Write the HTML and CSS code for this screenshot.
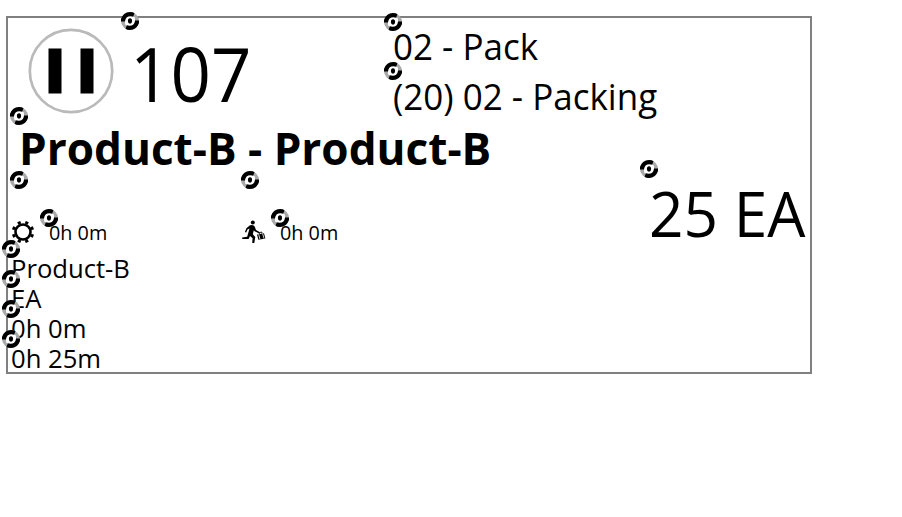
FILE: index.html
```
<!DOCTYPE html>
<html lang="en">
<head>
<meta charset="utf-8">
<title>Job card</title>
<link rel="stylesheet" href="styles.css">
</head>
<body>
<svg width="0" height="0" class="defs">
  <symbol id="link" viewBox="0 0 18 18">
    <circle cx="9" cy="9" r="9" fill="#aaa"/>
    <path d="M0 9.500V7Q2.500 0 9 0Q12 0 13.500 1.300L12 5H7L4 9.500Z" fill="#000"/>
    <path d="M18 8.500V11Q15.500 18 9 18Q6 18 4.500 16.700L6 13H11L14 8.500Z" fill="#000"/>
    <path d="M4 9.500Q4.500 4.200 9.500 4.200L13.500 5Q14.200 6.500 14 8.500Q13.500 13.800 8.500 13.800L4.500 13Q3.800 11.500 4 9.500Z" fill="#fff"/>
    <ellipse cx="9" cy="9" rx="2.100" ry="2.700" fill="#000"/>
  </symbol>
</svg>
<main class="card">
  <header class="head">
    <svg class="pause" viewBox="0 0 86 86"><circle cx="43" cy="43" r="41.200" fill="none" stroke="#bababa" stroke-width="2.700"/><path d="M20.500 20.500h13v45h-13zM52.500 20.500h13v45h-13z"/></svg>
    <div class="field number"><span class="text">107</span><svg class="badge"><use href="#link"/></svg></div>
    <div class="ops">
      <div class="field op"><span class="text">02 - Pack</span><svg class="badge"><use href="#link"/></svg></div>
      <div class="field op"><span class="text">(20) 02 - Packing</span><svg class="badge"><use href="#link"/></svg></div>
    </div>
  </header>
  <h1 class="field title"><span class="text">Product-B - Product-B</span><svg class="badge"><use href="#link"/></svg></h1>
  <section class="stats">
    <div class="field stat">
      <svg class="badge"><use href="#link"/></svg>
      <svg class="icon" viewBox="0 0 24 24"><circle cx="12" cy="12" r="7.500" fill="none" stroke="#000" stroke-width="2.600"/><path d="M15.200 4.200 16.300 1.600M19.800 8.800 22.400 7.700M19.800 15.200 22.400 16.300M15.200 19.800 16.300 22.400M8.800 19.800 7.700 22.400M4.200 15.200 1.600 16.300M4.200 8.800 1.600 7.700M8.800 4.200 7.700 1.600" stroke="#000" stroke-width="3.200"/></svg>
      <div class="field time"><span class="text">0h 0m</span><svg class="badge"><use href="#link"/></svg></div>
    </div>
    <div class="field stat">
      <svg class="badge"><use href="#link"/></svg>
      <svg class="icon" viewBox="0 0 24 24"><circle cx="10.800" cy="2.500" r="2"/><path d="M8 5.300Q11.500 4.200 12.700 6.500L14 10 17.500 12 16.700 13.300 12.600 11.300 11.800 10.200 10.800 14.200 13.300 17 12.300 23H10.200L10.600 18.300 8 16 6.600 19 .2 19V17.400L5.200 16.800 7.500 8.500 5.500 9.500 4.200 12.500 2.900 12 4.400 8.200Z"/><path d="m15 14.500 7-1.200 1.400 5.200-7 1.300z"/><path d="m17.400 14.200-.3-1.600 2.700-.5.300 1.500" fill="none" stroke="#000" stroke-width=".9"/><path d="m16.600 14.200 1.400 5M20.600 13.500l1.400 5" stroke="#fff" stroke-width=".8"/></svg>
      <div class="field time"><span class="text">0h 0m</span><svg class="badge"><use href="#link"/></svg></div>
    </div>
    <div class="field qty"><span class="text">25 EA</span><svg class="badge"><use href="#link"/></svg></div>
  </section>
  <section class="list">
    <div class="field row"><span class="text">Product-B</span><svg class="badge"><use href="#link"/></svg></div>
    <div class="field row"><span class="text">EA</span><svg class="badge"><use href="#link"/></svg></div>
    <div class="field row"><span class="text">0h 0m</span><svg class="badge"><use href="#link"/></svg></div>
    <div class="field row"><span class="text">0h 25m</span><svg class="badge"><use href="#link"/></svg></div>
  </section>
</main>
</body>
</html>
```
FILE: styles.css
```
* { box-sizing: border-box; }
body { margin: 0; background: #fff; color: #000; font-family: "Segoe UI", "Open Sans", sans-serif; }
.defs { display: block; height: 0; }
.card { width: 806px; height: 358px; margin: 16px 0 0 6px; border: 2px solid #808080; }
.field { position: relative; white-space: nowrap; }
.text { display: inline-block; transform-origin: 0 50%; }
.badge { position: absolute; left: -9px; top: -9px; width: 18px; height: 18px; }
.head { display: flex; height: 98px; }
.pause { width: 86px; height: 86px; margin: 9.500px 16.500px 0 19.500px; flex: none; }
.number { width: 263px; margin-top: 3px; padding: 12px 0 0 0; font-size: 74.500px; line-height: 80px; }
.number .text { transform: scaleX(.95); }
.ops { padding-top: 4px; }
.op { height: 49px; padding-top: 1px; font-size: 36px; line-height: 48px; }
.op + .op { padding-top: 2px; }
.op .text { transform: scaleX(.972); }
.title { width: 600px; height: 64px; margin: 0 0 0 11px; padding-top: 6px; font-size: 44.500px; line-height: 51px; font-weight: 700; }
.title .text { transform: scaleX(.991); }
.stats { display: flex; height: 69px; padding-left: 11px; }
.stat { display: flex; width: 231px; }
.icon { width: 24px; height: 24px; margin: 39.500px 14.500px 0 -8.500px; flex: none; }
.time { height: 30px; margin-top: 38px; font-size: 20px; line-height: 29px; }
.time .text { transform: scaleX(.99); }
.qty { margin: -11px 0 0 168px; padding-top: 4px; font-size: 62px; line-height: 80px; }
.qty .text { transform: scaleX(.974); }
.list { padding-left: 3px; }
.row { height: 30px; padding-top: 4px; font-size: 25px; line-height: 30px; }
.row .text { transform: scaleX(1.025); }
```
